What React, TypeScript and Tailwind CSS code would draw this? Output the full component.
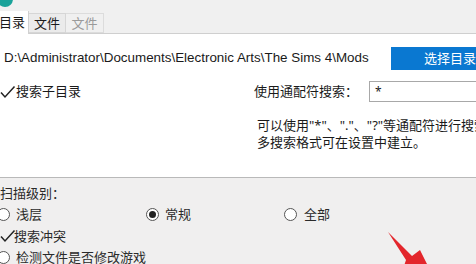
import React from 'react'

const font = { fontFamily: '"Noto Sans", "Noto Sans CJK SC", sans-serif' }

function Check() {
  return (
    <svg width="16" height="14" viewBox="0 0 16 14" className="shrink-0">
      <path d="M1 7.5 L5 12 L14.5 1.5" fill="none" stroke="#222" strokeWidth="1.5" />
    </svg>
  )
}

function Radio({ on }: { on?: boolean }) {
  return (
    <span className="flex h-[13px] w-[13px] shrink-0 items-center justify-center rounded-full border border-[#555] bg-white">
      {on && <span className="h-[7px] w-[7px] rounded-full bg-[#222]" />}
    </span>
  )
}

export default function App() {
  return (
    <div className="relative h-[264px] w-[476px] overflow-hidden whitespace-nowrap bg-[#f0efef] text-[13px] text-[#1a1a1a]" style={font}>
      <div className="relative h-[11px] bg-[#f0f0f0]">
        <span className="absolute -left-[3px] -top-[9px] h-[16px] w-[16px] rounded-full bg-[#1aa39a]" />
      </div>

      <div className="flex h-[23px] items-end border-b border-[#cfcfcf] bg-[#f0f0f0]">
        <div className="-mb-px flex h-[24px] w-[29px] items-center justify-end overflow-hidden border-r border-[#d0d0d0] bg-white pr-[3px] leading-none">
          <span className="shrink-0">目录</span>
        </div>
        <div className="flex h-[20px] w-[37px] items-center justify-center border border-l-0 border-[#d6d6d6] bg-[#ebebeb] leading-none">
          文件
        </div>
        <div className="flex h-[20px] w-[38px] items-center justify-center border border-l-0 border-[#dcdcdc] bg-[#f0f0f0] leading-none text-[#9a9a9a]">
          文件
        </div>
      </div>

      <div className="h-[144px] border-b border-[#b9b9b9] bg-white">
        <div className="flex h-[38px] items-center pt-[10px]">
          <span className="w-[396px] pl-[4px] text-[13.4px] leading-none" style={{ fontFamily: '"Liberation Sans", "Noto Sans CJK SC", sans-serif' }}>
            D:\Administrator\Documents\Electronic Arts\The Sims 4\Mods
          </span>
          <span className="flex h-[23px] flex-1 items-center bg-[#0a78d1] pl-[33px] leading-none text-white">
            选择目录
          </span>
        </div>

        <div className="mt-[9px] flex h-[21px] items-center">
          <div className="flex w-[254px] items-center">
            <Check />
            <span className="leading-none">搜索子目录</span>
          </div>
          <span className="w-[115px] leading-none">使用通配符搜索：</span>
          <div className="flex h-[21px] flex-1 items-center border border-r-0 border-[#a8a8a8] pl-[5px] text-[12px] leading-none">
            *
          </div>
        </div>

        <div className="mt-[15px] pl-[257px] leading-[17px]">
          <div>可以使用"*"、"."、"?"等通配符进行搜索，</div>
          <div>多搜索格式可在设置中建立。</div>
        </div>
      </div>

      <div className="pt-[7px] text-[#2a2a2a]">
        <div className="leading-[16px]">扫描级别：</div>
        <div className="mt-[4px] flex h-[18px] items-center">
          <div className="-ml-[3px] flex w-[146px] items-center gap-[6px]">
            <Radio />
            <span className="leading-none">浅层</span>
          </div>
          <div className="ml-[3px] flex w-[138px] items-center gap-[6px]">
            <Radio on />
            <span className="leading-none">常规</span>
          </div>
          <div className="flex items-center gap-[7px]">
            <Radio />
            <span className="leading-none">全部</span>
          </div>
        </div>
        <div className="mt-[4px] flex h-[18px] items-center">
          <Check />
          <span className="-ml-[2px] leading-none">搜索冲突</span>
        </div>
        <div className="-ml-[3px] mt-[3px] flex h-[18px] items-center gap-[6px]">
          <Radio />
          <span className="leading-none">检测文件是否修改游戏</span>
        </div>
      </div>

      <svg className="absolute left-[380px] top-[226px]" width="60" height="40" viewBox="0 0 60 40">
        <polygon points="8,6 32,30 40,24 48,40 24,40 26,34" fill="#e3262c" />
      </svg>
    </div>
  )
}
